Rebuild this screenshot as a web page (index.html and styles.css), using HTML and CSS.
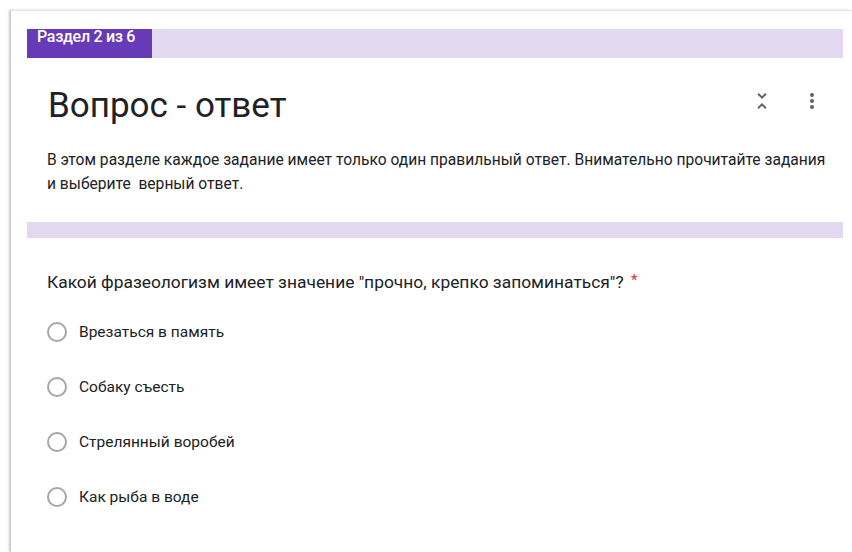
FILE: index.html
```html
<!DOCTYPE html>
<html lang="ru">
<head>
<meta charset="utf-8">
<title>Раздел 2 из 6</title>
<link rel="stylesheet" href="styles.css">
</head>
<body>
<div class="frame">
  <div class="section">
    <div class="bar"><div class="tab">Раздел 2 из 6</div></div>
    <div class="head">
      <h1 class="title">Вопрос - ответ</h1>
      <div class="actions">
        <svg class="icon" viewBox="0 0 24 24" width="24" height="24"><path d="M7.41 18.59L8.83 20 12 16.83 15.17 20l1.41-1.41L12 14l-4.59 4.59zm9.18-13.18L15.17 4 12 7.17 8.83 4 7.41 5.41 12 10l4.59-4.59z"/></svg>
        <svg class="icon" viewBox="0 0 24 24" width="24" height="24"><circle cx="12" cy="6" r="2"/><circle cx="12" cy="12" r="2"/><circle cx="12" cy="18" r="2"/></svg>
      </div>
    </div>
    <p class="desc">В этом разделе каждое задание имеет только один правильный ответ. Внимательно прочитайте задания и выберите&nbsp; верный ответ.</p>
    <div class="band"></div>
    <div class="question">
      <div class="q-title">Какой фразеологизм имеет значение "прочно, крепко запоминаться"? <span class="req">*</span></div>
      <ul class="options">
        <li class="option"><span class="radio"></span>Врезаться в память</li>
        <li class="option"><span class="radio"></span>Собаку съесть</li>
        <li class="option"><span class="radio"></span>Стрелянный воробей</li>
        <li class="option"><span class="radio"></span>Как рыба в воде</li>
      </ul>
    </div>
  </div>
</div>
</body>
</html>
```
FILE: styles.css
```css
* { box-sizing: border-box; }

html, body {
  margin: 0;
  background: #ffffff;
  font-family: Roboto, "Noto Sans", Arial, sans-serif;
  color: #202124;
  overflow: hidden;
}

.frame {
  margin: 10px 0 0 11px;
  height: 542px;
  border-top: 1px solid #e6e6e6;
  box-shadow: -2px 0 2px rgba(0, 0, 0, 0.22);
  padding: 18px 9px 0 16px;
}

.section {
  width: 816px;
}

.bar {
  height: 29px;
  background: #e2d9f1;
  display: flex;
}

.tab {
  width: 125px;
  background: #673ab7;
  color: #ffffff;
  font-size: 16px;
  font-weight: 500;
  line-height: 16px;
  padding: 0 0 0 10px;
  letter-spacing: -0.3px;
}

.head {
  display: flex;
  justify-content: space-between;
  align-items: flex-start;
  padding: 26px 19px 0 21px;
}

.title {
  margin: 0;
  font-size: 35px;
  font-weight: 400;
  line-height: 44px;
  color: #202124;
}

.actions {
  display: flex;
  gap: 26px;
  padding-top: 5px;
}

.icon {
  fill: #5f6368;
  display: block;
}

.desc {
  margin: 20px 0 0;
  padding: 0 8px 0 20px;
  font-size: 15.6px;
  line-height: 24px;
  color: #202124;
}

.band {
  margin-top: 26px;
  height: 16px;
  background: #e2d9f1;
}

.question {
  padding: 30px 20px 0;
}

.q-title {
  font-size: 17.4px;
  line-height: 24px;
  color: #202124;
}

.req {
  color: #d93025;
  font-size: 15px;
  vertical-align: 3px;
  margin-left: 3px;
}

.options {
  list-style: none;
  margin: 26px 0 0;
  padding: 0;
  display: flex;
  flex-direction: column;
  gap: 31px;
}

.option {
  display: flex;
  align-items: center;
  height: 24px;
  font-size: 15.5px;
  color: #202124;
}

.radio {
  width: 20px;
  height: 20px;
  border: 2px solid #a6a6a6;
  border-radius: 50%;
  margin-right: 12px;
  flex: none;
}
```
